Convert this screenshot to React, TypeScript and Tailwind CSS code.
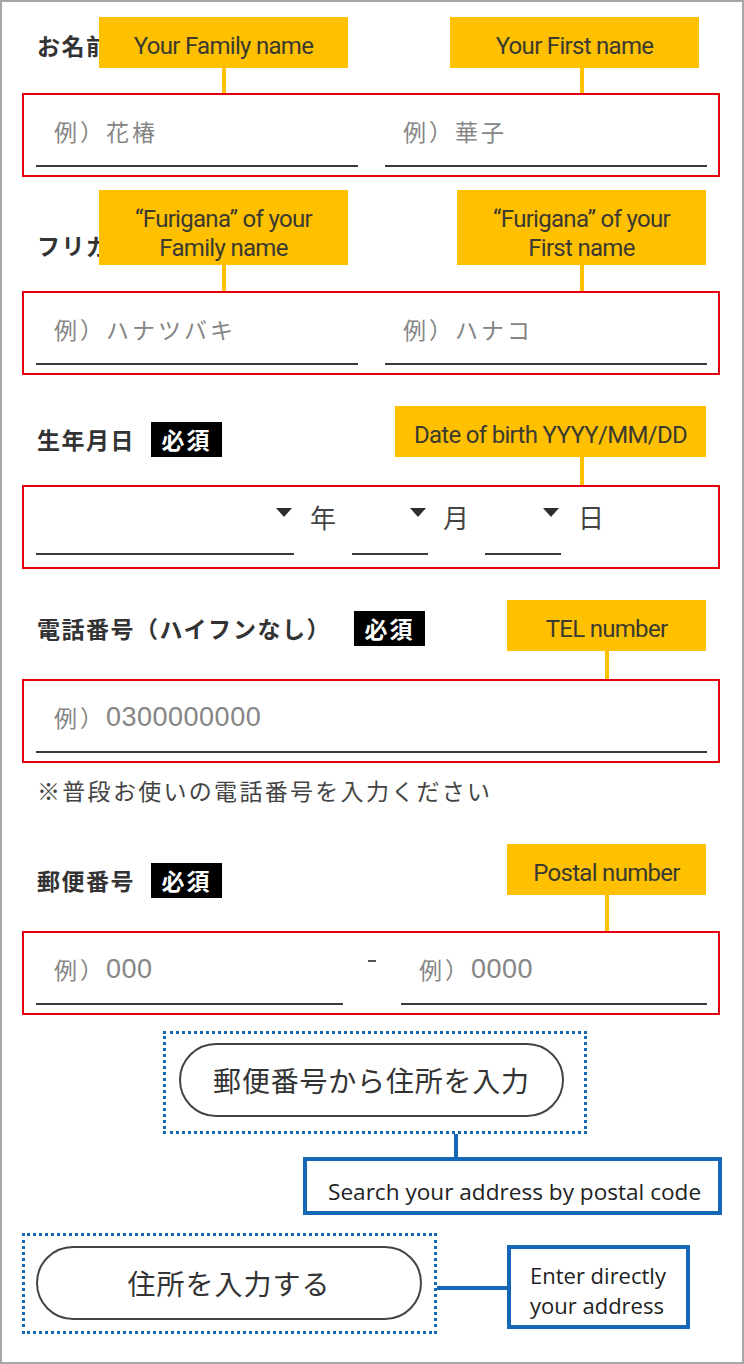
import React from "react";

const JP = "font-['Noto_Sans_CJK_JP','Noto_Sans',sans-serif]";

function Label({ text, badge, badgeMl, mt }: { text: string; badge?: boolean; badgeMl?: string; mt: string }) {
  return (
    <div className={`${mt} ml-[35px] h-[36px] flex items-center`}>
      <span className="text-[23px] font-bold tracking-[1.5px] text-[#333333]">{text}</span>
      {badge && (
        <span
          className={`${badgeMl ?? "ml-[16px]"} w-[71px] h-[35px] bg-black text-white text-[23px] font-bold tracking-[2px] flex items-center justify-center`}
        >
          必須
        </span>
      )}
    </div>
  );
}

function Input({ ph, num, w }: { ph: string; num?: string; w?: string }) {
  return (
    <div
      className={`${w ?? "flex-1"} h-[70px] border-b-2 border-[#3a3a3a] flex items-center pl-[18px] text-[23px] tracking-[3px] text-[#858585]`}
    >
      <span>{ph}</span>
      {num && (
        <span className="font-['Liberation_Sans',Arial,sans-serif] text-[27px] tracking-[0.5px] text-[#858585]">{num}</span>
      )}
    </div>
  );
}

function Tri() {
  return (
    <div className="w-0 h-0 border-l-[8px] border-r-[8px] border-t-[9px] border-l-transparent border-r-transparent border-t-[#2e2e2e]" />
  );
}

export default function App() {
  return (
    <div className={`relative w-[744px] h-[1364px] border-2 border-[#a6a6a6] bg-white overflow-hidden ${JP}`}>
      {/* お名前 */}
      <Label text="お名前" mt="mt-[25px]" />
      <div className="ml-[20px] mt-[30px] w-[698px] h-[84px] border-2 border-[#e3000f] flex items-end gap-[27px] pl-[12px] pr-[11px] pb-[8px]">
        <Input ph="例）花椿" />
        <Input ph="例）華子" />
      </div>

      {/* フリガナ */}
      <Label text="フリガナ" mt="mt-[50px]" />
      <div className="ml-[20px] mt-[28px] w-[698px] h-[84px] border-2 border-[#e3000f] flex items-end gap-[27px] pl-[12px] pr-[11px] pb-[8px]">
        <Input ph="例）ハナツバキ" />
        <Input ph="例）ハナコ" />
      </div>

      {/* 生年月日 */}
      <Label text="生年月日" badge mt="mt-[46px]" />
      <div className="ml-[20px] mt-[28px] w-[698px] h-[84px] border-2 border-[#e3000f] flex items-start pl-[12px] text-[#444444]">
        <div className="w-[258px] h-[68px] border-b-2 border-[#3a3a3a] flex justify-end items-start pt-[21px] pr-[2px]">
          <Tri />
        </div>
        <div className="ml-[16px] pt-[15px] text-[26px] leading-[30px]">年</div>
        <div className="ml-[16px] w-[76px] h-[68px] border-b-2 border-[#3a3a3a] flex justify-end items-start pt-[21px] pr-[2px]">
          <Tri />
        </div>
        <div className="ml-[15px] pt-[15px] text-[26px] leading-[30px]">月</div>
        <div className="ml-[16px] w-[76px] h-[68px] border-b-2 border-[#3a3a3a] flex justify-end items-start pt-[21px] pr-[2px]">
          <Tri />
        </div>
        <div className="ml-[17px] pt-[15px] text-[26px] leading-[30px]">日</div>
      </div>

      {/* 電話番号 */}
      <Label text="電話番号（ハイフンなし）" badge badgeMl="ml-[23px]" mt="mt-[41px]" />
      <div className="ml-[20px] mt-[33px] w-[698px] h-[84px] border-2 border-[#e3000f] flex items-end pl-[12px] pr-[11px] pb-[8px]">
        <Input ph="例）" num="0300000000" />
      </div>
      <div className="ml-[35px] mt-[11px] h-[32px] leading-[32px] text-[23px] tracking-[2.3px] text-[#444444]">
        ※普段お使いの電話番号を入力ください
      </div>

      {/* 郵便番号 */}
      <Label text="郵便番号" badge mt="mt-[56px]" />
      <div className="ml-[20px] mt-[33px] w-[698px] h-[84px] border-2 border-[#e3000f] flex items-end pl-[12px] pr-[11px] pb-[8px]">
        <Input ph="例）" num="000" w="w-[307px]" />
        <div className="w-[58px] h-[70px] flex justify-center items-start pt-[25px]">
          <div className="w-[8px] h-[2px] bg-[#555555]" />
        </div>
        <Input ph="例）" num="0000" />
      </div>

      {/* 郵便番号から住所を入力 */}
      <div className="ml-[161px] mt-[16px] w-[424px] h-[103px] border-[3px] border-dotted border-[#1468b6] pl-[13px] pt-[9px]">
        <div className="w-[385px] h-[74px] rounded-full border-2 border-[#444444] flex items-center justify-center text-[28px] tracking-[0.8px] text-[#333333]">
          郵便番号から住所を入力
        </div>
      </div>
      <div className="ml-[452px] w-[4px] h-[23px] bg-[#1468b6]" />
      <div className="ml-[301px] w-[419px] h-[58px] border-4 border-[#1468b6] flex items-end pl-[21px] pb-[4px]">
        <span className="font-['Open_Sans',sans-serif] text-[22.6px] leading-[30px] text-[#222222]">
          Search your address by postal code
        </span>
      </div>

      {/* 住所を入力する */}
      <div className="mt-[18px] flex items-start">
        <div className="ml-[20px] w-[415px] h-[101px] border-[3px] border-dotted border-[#1468b6] pl-[11px] pt-[10px]">
          <div className="w-[386px] h-[74px] rounded-full border-2 border-[#444444] flex items-center justify-center text-[28px] tracking-[1px] text-[#333333]">
            住所を入力する
          </div>
        </div>
        <div className="mt-[53px] w-[70px] h-[4px] bg-[#1468b6]" />
        <div className="mt-[12px] w-[183px] h-[84px] border-4 border-[#1468b6] pl-[19px] pt-[11px] font-['Open_Sans',sans-serif] text-[22px] leading-[30px] text-[#222222]">
          <div>Enter directly</div>
          <div>your address</div>
        </div>
      </div>

      {/* Callouts (annotations over content) */}
      <div className="absolute left-[97px] top-[15px] w-[249px] h-[51px] pt-[7px] bg-[#ffc000] flex items-center justify-center font-['Roboto',sans-serif] text-[24px] tracking-[-0.7px] text-[#3a3a30]">
        Your Family name
      </div>
      <div className="absolute left-[220px] top-[66px] w-[4px] h-[25px] bg-[#ffc000]" />
      <div className="absolute left-[448px] top-[15px] w-[249px] h-[51px] pt-[7px] bg-[#ffc000] flex items-center justify-center font-['Roboto',sans-serif] text-[24px] tracking-[-0.7px] text-[#3a3a30]">
        Your First name
      </div>
      <div className="absolute left-[578px] top-[66px] w-[4px] h-[25px] bg-[#ffc000]" />

      <div className="absolute left-[97px] top-[188px] w-[249px] h-[75px] pt-[12px] bg-[#ffc000] flex flex-col items-center justify-center font-['Roboto',sans-serif] text-[24px] leading-[29px] tracking-[-0.7px] text-[#3a3a30]">
        <div>“Furigana” of your</div>
        <div>Family name</div>
      </div>
      <div className="absolute left-[220px] top-[263px] w-[4px] h-[26px] bg-[#ffc000]" />
      <div className="absolute left-[455px] top-[188px] w-[249px] h-[75px] pt-[12px] bg-[#ffc000] flex flex-col items-center justify-center font-['Roboto',sans-serif] text-[24px] leading-[29px] tracking-[-0.7px] text-[#3a3a30]">
        <div>“Furigana” of your</div>
        <div>First name</div>
      </div>
      <div className="absolute left-[578px] top-[263px] w-[4px] h-[26px] bg-[#ffc000]" />

      <div className="absolute left-[393px] top-[404px] w-[311px] h-[51px] pt-[7px] bg-[#ffc000] flex items-center justify-center font-['Roboto',sans-serif] text-[24px] tracking-[-0.7px] text-[#3a3a30]">
        Date of birth YYYY/MM/DD
      </div>
      <div className="absolute left-[578px] top-[455px] w-[4px] h-[28px] bg-[#ffc000]" />

      <div className="absolute left-[505px] top-[598px] w-[199px] h-[51px] pt-[7px] bg-[#ffc000] flex items-center justify-center font-['Roboto',sans-serif] text-[24px] tracking-[-0.7px] text-[#3a3a30]">
        TEL number
      </div>
      <div className="absolute left-[603px] top-[649px] w-[4px] h-[28px] bg-[#ffc000]" />

      <div className="absolute left-[505px] top-[842px] w-[199px] h-[51px] pt-[7px] bg-[#ffc000] flex items-center justify-center font-['Roboto',sans-serif] text-[24px] tracking-[-0.7px] text-[#3a3a30]">
        Postal number
      </div>
      <div className="absolute left-[603px] top-[893px] w-[4px] h-[36px] bg-[#ffc000]" />
    </div>
  );
}
